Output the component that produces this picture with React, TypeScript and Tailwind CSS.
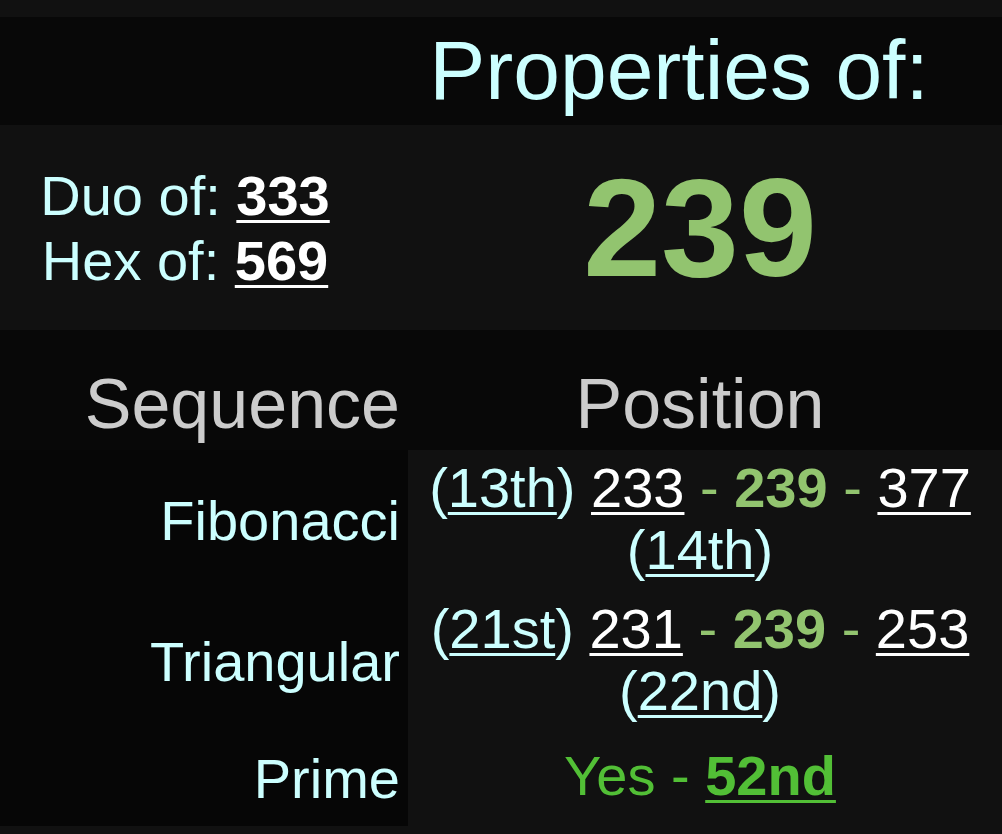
import React from "react";

const cyan = "text-[#ccffff]";

function U({ children, cls }: { children: React.ReactNode; cls: string }) {
  return <span className={`underline decoration-[3px] underline-offset-[5px] ${cls}`}>{children}</span>;
}

function SeqLine({ a, prev, next, ord1, ord2 }: { a: string; prev: string; next: string; ord1: string; ord2: string }) {
  return (
    <div className="text-center text-[56px] leading-[62px] pl-[2px] pr-[12px] text-white">
      <span className={cyan}>(</span>
      <U cls={cyan}>{ord1}</U>
      <span className={cyan}>)</span>{" "}
      <U cls="text-white">{prev}</U>
      <span className="text-[#92c46f]"> - </span>
      <span className="font-bold text-[#92c46f]">{a}</span>
      <span className="text-[#92c46f]"> - </span>
      <U cls="text-white">{next}</U>
      <br />
      <span className={cyan}>(</span>
      <U cls={cyan}>{ord2}</U>
      <span className={cyan}>)</span>
    </div>
  );
}

export default function App() {
  return (
    <div className="min-h-[834px] bg-[#111111] pt-[17px] font-['Liberation_Sans',Arial,sans-serif]">
      {/* Header */}
      <div className="grid grid-cols-[408px_1fr] bg-[#080808]">
        <div />
        <div className={`text-center pr-[52px] text-[84px] leading-[96px] pt-[5px] pb-[7px] ${cyan}`}>Properties of:</div>
      </div>

      {/* Number row */}
      <div className="grid grid-cols-[408px_1fr] h-[205px] items-center">
        <div className={`text-center pr-[38px] text-[56px] leading-[65px] ${cyan}`}>
          <div>
            Duo of: <U cls="text-white font-bold">333</U>
          </div>
          <div>
            Hex of: <U cls="text-white font-bold">569</U>
          </div>
        </div>
        <div className="text-center pl-[2px] pr-[12px] text-[140px] leading-[165px] font-bold text-[#92c46f]">239</div>
      </div>

      {/* Column headers */}
      <div className="grid grid-cols-[408px_1fr] h-[120px] items-end bg-[#080808] pb-[6px]">
        <div className="text-right pr-[8px] text-[70px] leading-[80px] text-[#cccccc]">Sequence</div>
        <div className="text-center pl-[2px] pr-[12px] text-[70px] leading-[80px] text-[#cccccc]">Position</div>
      </div>

      {/* Data rows */}
      <div className="grid grid-cols-[408px_1fr]">
        <div className={`bg-[#060606] flex items-center justify-end pr-[8px] text-[56px] leading-[62px] ${cyan}`}>Fibonacci</div>
        <div className="pt-[7px] pb-[10px]">
          <SeqLine ord1="13th" prev="233" a="239" next="377" ord2="14th" />
        </div>

        <div className={`bg-[#060606] flex items-center justify-end pr-[8px] text-[56px] leading-[62px] ${cyan}`}>Triangular</div>
        <div className="pt-[7px] pb-[10px]">
          <SeqLine ord1="21st" prev="231" a="239" next="253" ord2="22nd" />
        </div>

        <div className={`bg-[#060606] flex items-center justify-end pr-[8px] text-[56px] leading-[62px] ${cyan}`}>Prime</div>
        <div className="pt-[13px] pb-[19px] text-center pl-[2px] pr-[12px] text-[56px] leading-[62px] text-[#52bf36]">
          Yes - <U cls="font-bold text-[#52bf36]">52nd</U>
        </div>
      </div>
    </div>
  );
}
